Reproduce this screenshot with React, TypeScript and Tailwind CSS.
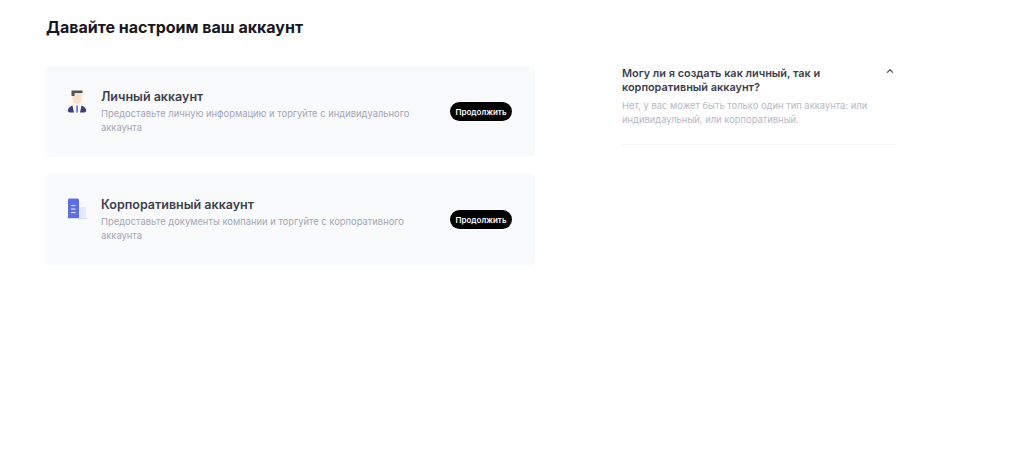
import React from 'react'
import { ChevronUp } from 'lucide-react'

const PersonIcon = () => (
    <svg width="20" height="24" viewBox="0 0 20 24">
        <path d="M5.500 3h9v6a4.500 5 0 0 1-9 0z" fill="#fbdcc6" />
        <path d="M4.500 0.500h11v2.500H7.500v3h-3z" fill="#55514f" />
        <path d="M6 14h8l-2 8.500H8z" fill="#fdf3ea" />
        <rect x="9.300" y="15.500" width="1.500" height="7" fill="#3f6fe0" />
        <path d="M5.500 15.500 L7 22.500 H3 C1 22.500 0.500 21 1 19.500 C1.600 17.600 3.400 16.200 5.500 15.500z" fill="#3a3f7c" />
        <path d="M14.500 15.500 L13 22.500 H17 C19 22.500 19.500 21 19 19.500 C18.400 17.600 16.600 16.200 14.500 15.500z" fill="#3a3f7c" />
    </svg>
)

const BuildingIcon = () => (
    <svg width="20" height="24" viewBox="0 0 20 24">
        <rect x="12" y="9" width="7" height="11" fill="#e4eafb" />
        <path d="M1 2a1.500 1.500 0 0 1 1.500-1.500h8A1.500 1.500 0 0 1 12 2v18H1z" fill="#5a6ee8" />
        <rect x="0" y="20" width="20" height="1" fill="#d3dcf9" />
        <rect x="4" y="7" width="4.500" height="1.100" fill="#e6eafc" />
        <rect x="4" y="10.500" width="4.500" height="1.100" fill="#e6eafc" />
        <rect x="4" y="14" width="4.500" height="1.100" fill="#e6eafc" />
    </svg>
)

const accounts = [
    {
        title: 'Личный аккаунт',
        text: 'Предоставьте личную информацию и торгуйте с индивидуального аккаунта',
        icon: PersonIcon,
    },
    {
        title: 'Корпоративный аккаунт',
        text: 'Предоставьте документы компании и торгуйте с корпоративного аккаунта',
        icon: BuildingIcon,
    },
]

const App = () => {
    return (
        <div className="h-[456px] w-[1024px] overflow-hidden bg-white pl-[46px] font-['Inter',sans-serif]">
            {/* Header */}
            <h1 className="pt-[17px] text-[16px] leading-[20px] font-bold text-[#16181f]">
                Давайте настроим ваш аккаунт
            </h1>

            <div className="mt-[29px] flex items-start">
                {/* Account types */}
                <div className="flex w-[489px] flex-col gap-[17px]">
                    {accounts.map((account) => (
                        <div
                            key={account.title}
                            className="flex h-[91px] items-center rounded-sm bg-[#f9fafc] pr-[23px] pl-[21px]"
                        >
                            <div className="mb-[20px] w-[20px] shrink-0">
                                <account.icon />
                            </div>
                            <div className="ml-[14px] w-[322px]">
                                <h3 className="text-[12.5px] leading-[18px] font-semibold text-[#3c3f50]">
                                    {account.title}
                                </h3>
                                <p className="mt-[1px] text-[9.400px] leading-[14px] text-[#a3a6b8]">{account.text}</p>
                            </div>
                            <button className="ml-auto flex h-[19px] w-[62px] items-center justify-center rounded-full bg-black text-[8px] font-semibold text-white">
                                Продолжить
                            </button>
                        </div>
                    ))}
                </div>

                {/* FAQ */}
                <div className="ml-[87px] w-[273px] border-b border-[#f1f2f5] pb-[17px]">
                    <div className="flex items-start justify-between">
                        <h4 className="w-[225px] text-[10.900px] leading-[14px] font-semibold text-[#3c3f50]">
                            Могу ли я создать как личный, так и корпоративный аккаунт?
                        </h4>
                        <ChevronUp className="size-[10px] text-[#5a5d6e]" strokeWidth={3} />
                    </div>
                    <p className="mt-[5px] text-[9.400px] leading-[14px] text-[#b5b8c6]">
                        Нет, у вас может быть только один тип аккаунта: или индивидаульный, или корпоративный.
                    </p>
                </div>
            </div>
        </div>
    )
}

export default App
